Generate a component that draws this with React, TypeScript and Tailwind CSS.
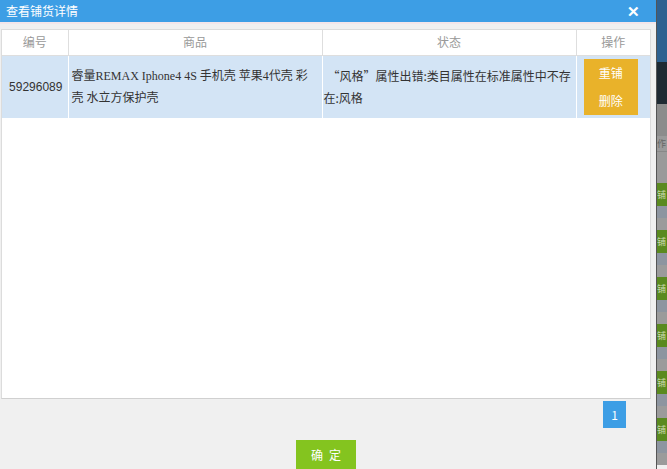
import React from "react";

const cjk = { fontFamily: '"Noto Sans CJK SC", "Liberation Sans", sans-serif' };
const simsun = { fontFamily: '"Liberation Serif", "Noto Sans CJK SC", serif' };

function BackStrip() {
  const rows = [0, 1, 2, 3, 4, 5];
  return (
    <div className="w-[11px] h-full border-l border-[#555] flex flex-col overflow-hidden" style={cjk}>
      <div className="h-[62px] bg-[#2e6190]" />
      <div className="h-[42px] bg-[#1f2a33]" />
      <div className="h-[32px] bg-[#8c8c8c]" />
      <div className="h-[16px] bg-[#9a9a9a] text-[9px] leading-[16px] text-[#666] border-b border-[#888]">作</div>
      <div className="h-[31px] bg-[#9a9a9a]" />
      {rows.map((i) => (
        <div key={i} className="h-[47px] flex flex-col shrink-0">
          <div className="h-[23px] bg-[#5a8a1f] text-[9px] leading-[23px] text-[#c9d9b0]">铺</div>
          <div className="h-[12px] bg-[#8d95a0]" />
          <div className="h-[12px] bg-[#9b9b9b]" />
        </div>
      ))}
    </div>
  );
}

export default function App() {
  return (
    <div className="w-[667px] h-[469px] flex overflow-hidden bg-[#f0f0f0]" style={cjk}>
      {/* Dialog */}
      <div className="w-[656px] h-full flex flex-col bg-[#f0f0f0]">
        <div className="h-[22px] bg-[#3d9ee5] flex items-center justify-between pl-[6px] pr-[16px] shrink-0">
          <span className="text-white text-[12px] leading-none">查看铺货详情</span>
          <span className="text-white text-[15px] font-bold leading-none" style={{ fontFamily: '"Liberation Sans", sans-serif' }}>
            ✕
          </span>
        </div>
        <div className="h-[2px] bg-[#f3e6ea] shrink-0" />

        <div className="pt-[5px] pl-[1px] pr-[5px]">
          <div className="h-[370px] bg-white border border-[#dcdcdc] border-b-[#d0d0d0]">
            <table className="w-full table-fixed border-collapse">
              <colgroup>
                <col className="w-[66px]" />
                <col className="w-[254px]" />
                <col className="w-[254px]" />
                <col />
              </colgroup>
              <thead>
                <tr className="h-[25px] text-[12px] text-[#999]">
                  <th className="font-normal border-r border-b border-[#dedede]">编号</th>
                  <th className="font-normal border-r border-b border-[#dedede]">商品</th>
                  <th className="font-normal border-r border-b border-[#dedede]">状态</th>
                  <th className="font-normal border-b border-[#dedede]">操作</th>
                </tr>
              </thead>
              <tbody>
                <tr className="h-[62px] bg-[#d3e4f5] text-[#333]">
                  <td className="text-center text-[12px] border-r border-white pl-[2px]" style={{ fontFamily: '"Liberation Sans", sans-serif' }}>
                    59296089
                  </td>
                  <td className="px-[3px] text-[12px] leading-[22px] border-r border-white" style={simsun}>
                    睿量REMAX Iphone4 4S 手机壳 苹果4代壳 彩壳 水立方保护壳
                  </td>
                  <td className="pl-[1px] pr-[3px] text-[12px] leading-[22px] border-r border-white indent-[4px]">
                    “风格”属性出错:类目属性在标准属性中不存在:风格
                  </td>
                  <td className="pl-[7px] pr-[12px] py-[3px]">
                    <div className="h-[56px] bg-[#e9b22a] flex flex-col items-center justify-around text-[12px] text-white">
                      <span>重铺</span>
                      <span>删除</span>
                    </div>
                  </td>
                </tr>
              </tbody>
            </table>
          </div>
          <div className="h-[30px] flex justify-end items-start pr-[25px] pt-[2px]">
            <div className="w-[23px] h-[27px] bg-[#3d9ee5] text-white text-[12px] flex items-center justify-center">1</div>
          </div>
        </div>

        <div className="mt-[11px] flex justify-center pr-[4px]">
          <button className="w-[60px] h-[30px] bg-[#84c41f] text-white text-[12px] tracking-[6px] pl-[6px]">确定</button>
        </div>
      </div>

      <BackStrip />
    </div>
  );
}
